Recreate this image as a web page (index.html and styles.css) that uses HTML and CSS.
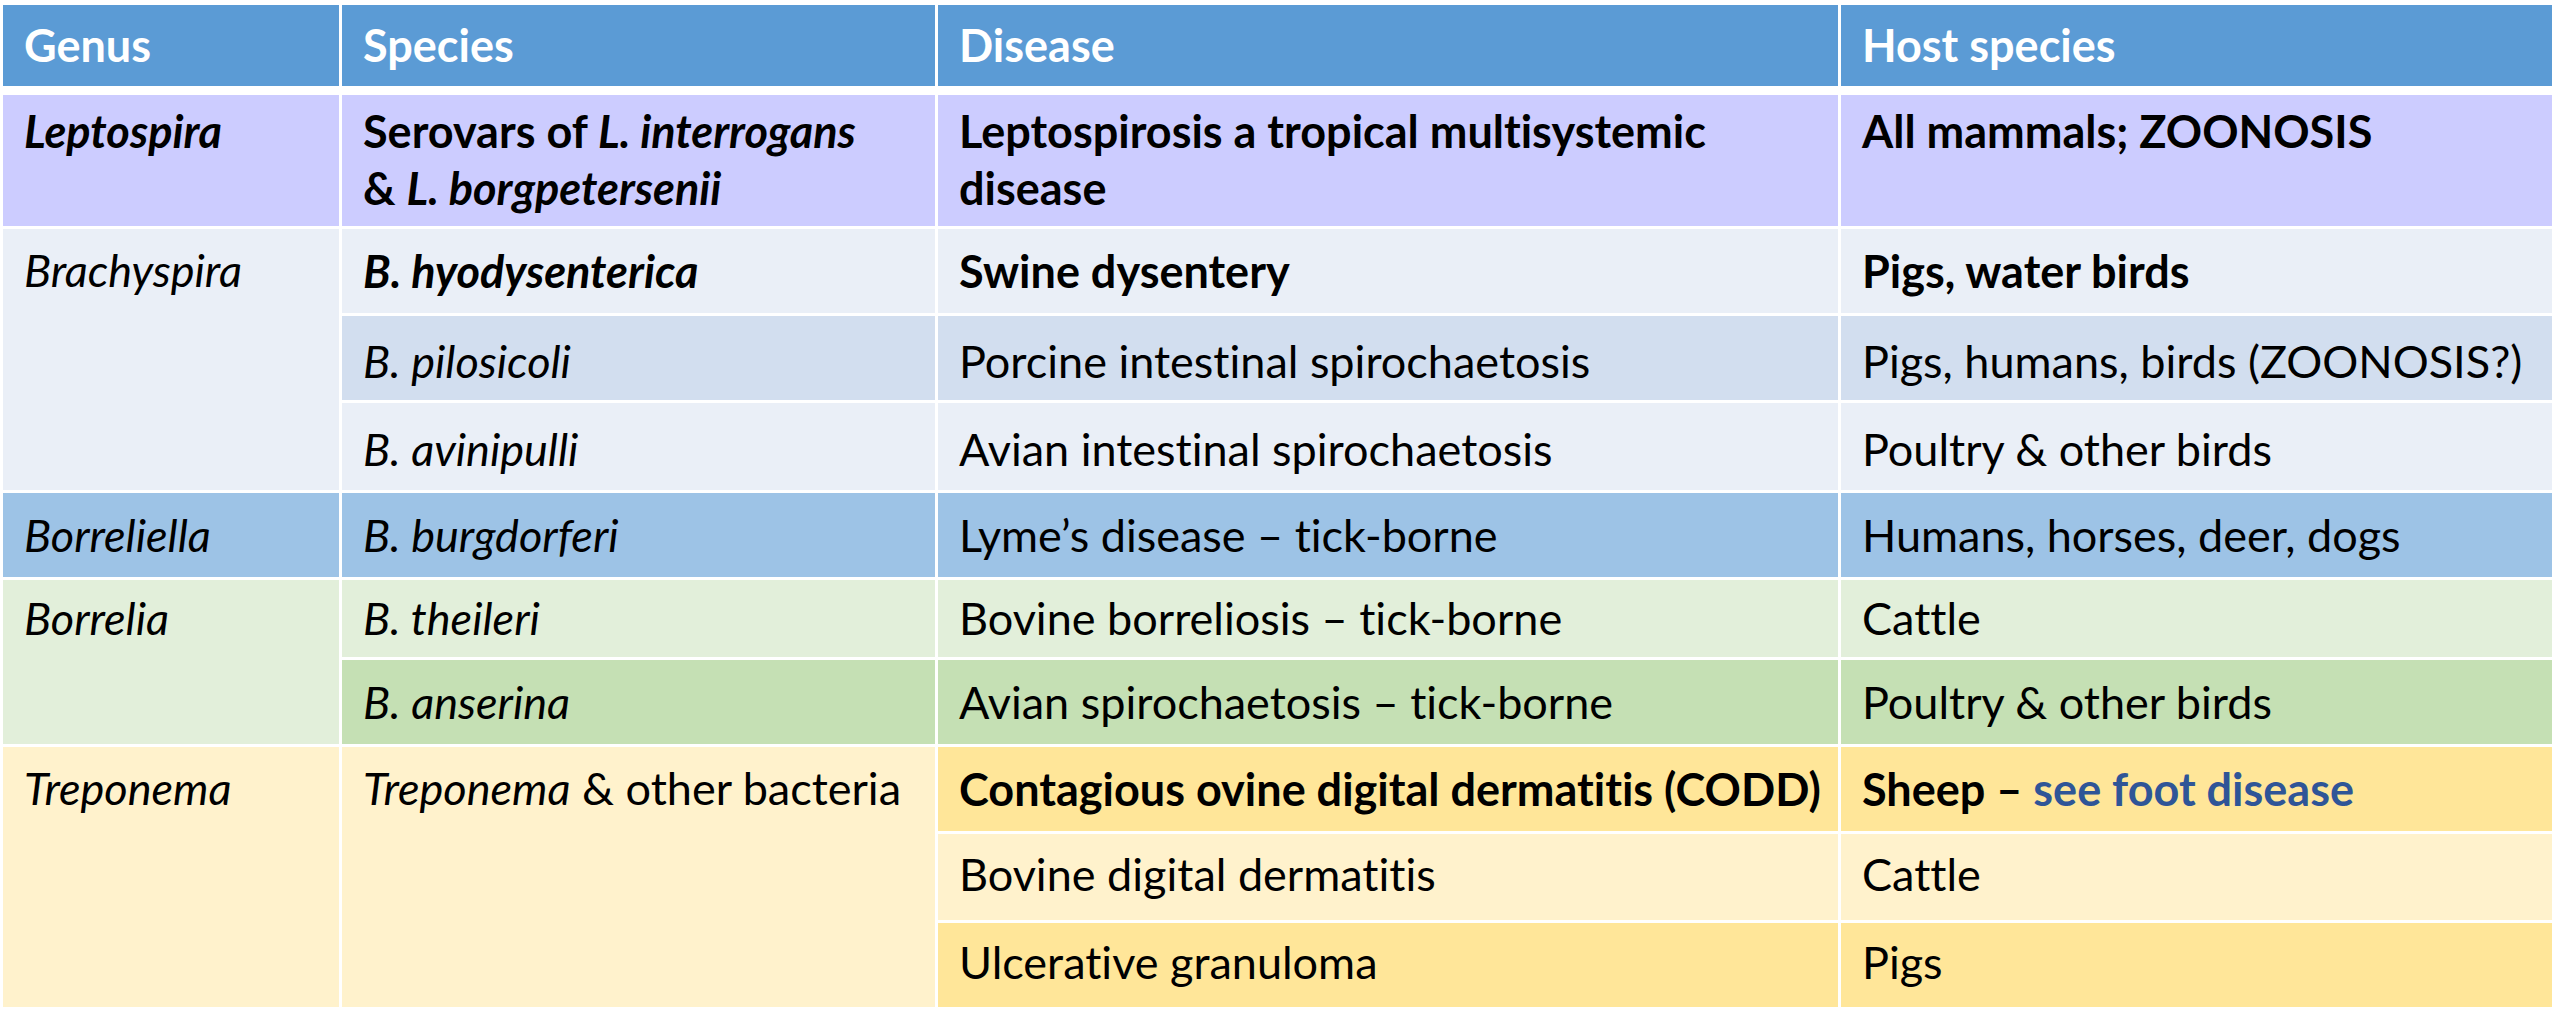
FILE: index.html
```html
<!DOCTYPE html>
<html lang="en">
<head>
<meta charset="utf-8">
<title>Spirochaetes</title>
<link rel="stylesheet" href="styles.css">
</head>
<body>
<table class="grid">
  <colgroup>
    <col class="c-genus">
    <col class="c-species">
    <col class="c-disease">
    <col class="c-host">
  </colgroup>
  <thead>
    <tr class="h-head">
      <th>Genus</th>
      <th>Species</th>
      <th>Disease</th>
      <th>Host species</th>
    </tr>
  </thead>
  <tbody>
    <tr class="h-lepto lepto">
      <td class="b"><i>Leptospira</i></td>
      <td class="b">Serovars of <i>L. interrogans</i><br>&amp; <i>L. borgpetersenii</i></td>
      <td class="b">Leptospirosis a tropical multisystemic<br>disease</td>
      <td class="b">All mammals; ZOONOSIS</td>
    </tr>
    <tr class="h-r2">
      <td rowspan="3" class="brachy-a span"><i>Brachyspira</i></td>
      <td class="brachy-a b"><i>B. hyodysenterica</i></td>
      <td class="brachy-a b">Swine dysentery</td>
      <td class="brachy-a b">Pigs, water birds</td>
    </tr>
    <tr class="h-r3 brachy-b low">
      <td><i>B. pilosicoli</i></td>
      <td>Porcine intestinal spirochaetosis</td>
      <td>Pigs, humans, birds (ZOONOSIS?)</td>
    </tr>
    <tr class="h-r4 brachy-a low">
      <td><i>B. avinipulli</i></td>
      <td>Avian intestinal spirochaetosis</td>
      <td>Poultry &amp; other birds</td>
    </tr>
    <tr class="h-r5 borreliella">
      <td><i>Borreliella</i></td>
      <td><i>B. burgdorferi</i></td>
      <td>Lyme’s disease – tick-borne</td>
      <td>Humans, horses, deer, dogs</td>
    </tr>
    <tr class="h-r6 borrelia-a">
      <td rowspan="2" class="span span-short"><i>Borrelia</i></td>
      <td><i>B. theileri</i></td>
      <td>Bovine borreliosis – tick-borne</td>
      <td>Cattle</td>
    </tr>
    <tr class="h-r7 borrelia-b">
      <td><i>B. anserina</i></td>
      <td>Avian spirochaetosis – tick-borne</td>
      <td>Poultry &amp; other birds</td>
    </tr>
    <tr class="h-r8">
      <td rowspan="3" class="trep-a span"><i>Treponema</i></td>
      <td rowspan="3" class="trep-a span"><i>Treponema</i> &amp; other bacteria</td>
      <td class="trep-b b">Contagious ovine digital dermatitis (CODD)</td>
      <td class="trep-b b">Sheep – <span class="link">see foot disease</span></td>
    </tr>
    <tr class="h-r9 trep-a high">
      <td>Bovine digital dermatitis</td>
      <td>Cattle</td>
    </tr>
    <tr class="h-r10 trep-b high">
      <td>Ulcerative granuloma</td>
      <td>Pigs</td>
    </tr>
  </tbody>
</table>
</body>
</html>
```

FILE: styles.css
```css
html, body {
  margin: 0;
  padding: 0;
  background: #ffffff;
}

body {
  width: 2560px;
  height: 1019px;
  overflow: hidden;
  font-family: "Lato", "Open Sans", sans-serif;
  font-variant-ligatures: none;
  font-feature-settings: "liga" 0, "clig" 0;
  color: #000000;
}

.grid {
  margin-top: 2px;
  width: 2555px;
  table-layout: fixed;
  border-collapse: separate;
  border-spacing: 3px;
  background: #ffffff;
}

.c-genus { width: 336px; }
.c-species { width: 593px; }
.c-disease { width: 900px; }
.c-host { width: 711px; }

.grid th,
.grid td {
  padding: 0 0 0 21px;
  vertical-align: middle;
  text-align: left;
  font-size: 45px;
  line-height: 57px;
  white-space: nowrap;
  overflow: hidden;
}

.grid .lepto td {
  vertical-align: top;
  padding-top: 8px;
}

.grid .low td {
  padding-top: 6px;
}

.grid .high td {
  padding-bottom: 6px;
}

.grid td.span {
  vertical-align: top;
  padding-top: 13px;
}

.grid td.span-short {
  padding-top: 10px;
}

.grid th {
  background: #5b9bd5;
  color: #ffffff;
  font-weight: 700;
  border-bottom: 6px solid #ffffff;
}

.b { font-weight: 700; }

.h-head { height: 87px; }
.h-lepto { height: 131px; }
.h-r2 { height: 84px; }
.h-r3 { height: 84px; }
.h-r4 { height: 87px; }
.h-r5 { height: 84px; }
.h-r6 { height: 77px; }
.h-r7 { height: 84px; }
.h-r8 { height: 84px; }
.h-r9 { height: 86px; }
.h-r10 { height: 84px; }

.lepto td { background: #ccccff; }
.grid td.brachy-a, .brachy-a td { background: #eaeff7; }
.brachy-b td { background: #d2deef; }
.borreliella td { background: #9dc3e6; }
.borrelia-a td { background: #e2efda; }
.borrelia-b td { background: #c5e0b4; }
.grid td.trep-a, .trep-a td { background: #fff2cc; }
.grid td.trep-b, .trep-b td { background: #ffe699; }

.link {
  color: #2f5597;
}
```
